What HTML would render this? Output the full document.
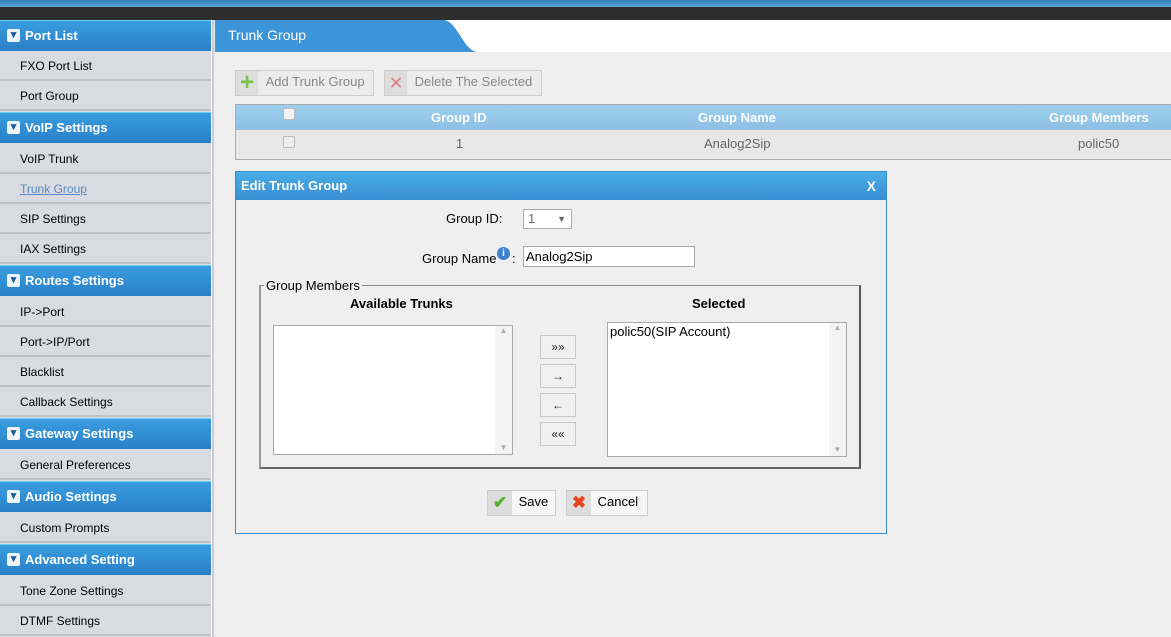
<!DOCTYPE html>
<html><head><style>
*{box-sizing:border-box;margin:0;padding:0}
body{width:1171px;height:637px;overflow:hidden;background:#efefef;font-family:"Liberation Sans",Arial,sans-serif;font-size:12px;position:relative}
.abs{position:absolute}
#top{left:0;top:0;width:1171px;height:20px;background:#2d2d2d}
#top .s{left:0;top:0;width:1171px;height:7px;background:linear-gradient(#2f7fb8,#5aa6d8)}
#side{left:0;top:20px;width:211px;height:617px;background:#d8dce2}
#sep{left:211px;top:20px;width:3px;height:617px;background:#c8ccd2;border-left:1px solid #fff}
.h{position:absolute;left:0;width:211px;height:31px;background:linear-gradient(#3a9ee0,#2a80c8);border-top:1px solid #6fd0f5;color:#fff;font-weight:bold;font-size:13px;line-height:29px;padding-left:25px}
.h:before{content:"▾";position:absolute;left:7px;top:8px;width:13px;height:13px;background:#eef4fa;color:#1e5f99;font-size:11px;line-height:13px;text-align:center;border-radius:2px}
.i{position:absolute;left:0;width:211px;height:30px;border-bottom:2px solid #bfc3c8;color:#000;font-size:12px;line-height:30px;padding-left:20px}
.btn{position:absolute;height:26px;border:1px solid #ccc;background:#ececec;color:#888;font-size:13px;line-height:22px}
.btn span:first-child{vertical-align:top;line-height:24px}
.chk{position:absolute;width:12px;height:12px;border:1px solid #bbb;border-radius:2px;background:#eee}
.ar{position:absolute;left:540px;width:36px;height:24px;border:1px solid #c8c8c8;background:#f0f0f0;text-align:center;line-height:22px;font-size:12px;color:#223}
</style></head><body>
<div id="top" class="abs"><div class="s abs"></div></div>
<div id="side" class="abs"></div>
<div id="sep" class="abs"></div>
<div class="h" style="top:20px">Port List</div>
<div class="i" style="top:51px">FXO Port List</div>
<div class="i" style="top:81px">Port Group</div>
<div class="h" style="top:112px">VoIP Settings</div>
<div class="i" style="top:144px">VoIP Trunk</div>
<div class="i" style="top:174px;color:#5a8ac0;text-decoration:underline">Trunk Group</div>
<div class="i" style="top:204px">SIP Settings</div>
<div class="i" style="top:234px">IAX Settings</div>
<div class="h" style="top:265px">Routes Settings</div>
<div class="i" style="top:297px">IP-&gt;Port</div>
<div class="i" style="top:327px">Port-&gt;IP/Port</div>
<div class="i" style="top:357px">Blacklist</div>
<div class="i" style="top:387px">Callback Settings</div>
<div class="h" style="top:418px">Gateway Settings</div>
<div class="i" style="top:450px">General Preferences</div>
<div class="h" style="top:481px">Audio Settings</div>
<div class="i" style="top:513px">Custom Prompts</div>
<div class="h" style="top:544px">Advanced Setting</div>
<div class="i" style="top:576px">Tone Zone Settings</div>
<div class="i" style="top:606px">DTMF Settings</div>

<div class="abs" style="left:215px;top:20px;width:956px;height:32px;background:#fff"></div>
<svg class="abs" style="left:215px;top:20px" width="270" height="32"><path d="M0 0H228C242 0 248 30 262 32H0Z" fill="#3b95d8"/></svg>
<div class="abs" style="left:228px;top:20px;line-height:31px;color:#fff;font-size:14px">Trunk Group</div>

<div class="btn" style="left:235px;top:70px;width:139px"><span style="display:inline-block;width:22px;height:24px;background:#ddd;color:#7cc34a;font-size:24px;font-weight:bold;text-align:center">+</span> <span style="margin-left:4px">Add Trunk Group</span></div>
<div class="btn" style="left:384px;top:70px;width:158px"><span style="display:inline-block;width:22px;height:24px;background:#ddd;color:#e57f7f;font-size:18px;text-align:center">✕</span> <span style="margin-left:4px">Delete The Selected</span></div>

<div class="abs" style="left:235px;top:104px;width:936px;height:56px;border-top:1px solid #aaa;border-bottom:1px solid #aaa;border-left:1px solid #aaa;background:#e7e7e7"></div>
<div class="abs" style="left:236px;top:105px;width:935px;height:25px;background:linear-gradient(#9dcfed,#8cbfe4);color:#fff;font-weight:bold;font-size:13px;line-height:25px">
<span class="abs" style="left:195px">Group ID</span><span class="abs" style="left:462px">Group Name</span><span class="abs" style="left:813px">Group Members</span></div>
<div class="chk" style="left:283px;top:108px;background:#f4f4f4"></div>
<div class="chk" style="left:283px;top:136px"></div>
<div class="abs" style="left:236px;top:131px;width:935px;line-height:26px;color:#666;font-size:13px"><span class="abs" style="left:220px">1</span><span class="abs" style="left:468px">Analog2Sip</span><span class="abs" style="left:842px">polic50</span></div>

<div class="abs" style="left:235px;top:171px;width:652px;height:363px;border:1px solid #3a8fd0;background:#efefef"></div>
<div class="abs" style="left:236px;top:172px;width:650px;height:28px;background:linear-gradient(#48aee6,#3a8dd2);color:#fff;font-weight:bold;font-size:13px;line-height:28px;padding-left:5px">Edit Trunk Group<span style="position:absolute;right:10px;font-size:14px">X</span></div>
<div class="abs" style="left:446px;top:211px;font-size:13px">Group ID:</div>
<div class="abs" style="left:523px;top:209px;width:49px;height:20px;border:1px solid #aaa;background:#fff;font-size:13px;color:#666;line-height:18px;padding-left:4px">1<span style="position:absolute;right:5px;font-size:9px">▼</span></div>
<div class="abs" style="left:422px;top:251px;font-size:13px">Group Name</div>
<div class="abs" style="left:497px;top:247px;width:13px;height:13px;border-radius:50%;background:#3f7fd0;color:#fff;font-size:10px;font-weight:bold;text-align:center;line-height:13px">i</div>
<div class="abs" style="left:512px;top:251px;font-size:13px">:</div>
<div class="abs" style="left:523px;top:246px;width:172px;height:21px;border:1px solid #aaa;background:#fff;font-size:13px;line-height:19px;padding-left:2px">Analog2Sip</div>

<div class="abs" style="left:259px;top:285px;width:602px;height:184px;border:2px solid #777;border-top-width:1px;border-color:#888 #555 #666 #999"></div>
<div class="abs" style="left:264px;top:278px;background:#efefef;padding:0 2px;font-size:13px">Group Members</div>
<div class="abs" style="left:350px;top:296px;font-weight:bold;font-size:13px">Available Trunks</div>
<div class="abs" style="left:692px;top:296px;font-weight:bold;font-size:13px">Selected</div>
<div class="abs" style="left:273px;top:325px;width:240px;height:130px;border:1px solid #aaa;background:#fff"><div class="abs" style="right:0;top:0;width:17px;height:128px;background:#f3f3f3;color:#aaa;font-size:8px;text-align:center">▲<div style="position:absolute;bottom:2px;width:17px">▼</div></div></div>
<div class="abs" style="left:607px;top:322px;width:240px;height:135px;border:1px solid #aaa;background:#fff;font-size:13px;padding:1px 2px">polic50(SIP Account)<div class="abs" style="right:0;top:0;width:17px;height:133px;background:#f3f3f3;color:#aaa;font-size:8px;text-align:center">▲<div style="position:absolute;bottom:2px;width:17px">▼</div></div></div>
<div class="ar" style="top:335px">»»</div>
<div class="ar" style="top:364px">→</div>
<div class="ar" style="top:393px">←</div>
<div class="ar" style="top:422px">««</div>

<div class="btn" style="left:487px;top:490px;width:69px;color:#000;background:#f6f6f6"><span style="display:inline-block;width:24px;height:24px;background:#ddd;color:#4cb32a;font-size:17px;font-weight:bold;text-align:center">✔</span> <span style="margin-left:3px">Save</span></div>
<div class="btn" style="left:566px;top:490px;width:82px;color:#000;background:#f6f6f6"><span style="display:inline-block;width:24px;height:24px;background:#ddd;color:#e8451f;font-size:17px;font-weight:bold;text-align:center">✖</span> <span style="margin-left:3px">Cancel</span></div>
</body></html>
